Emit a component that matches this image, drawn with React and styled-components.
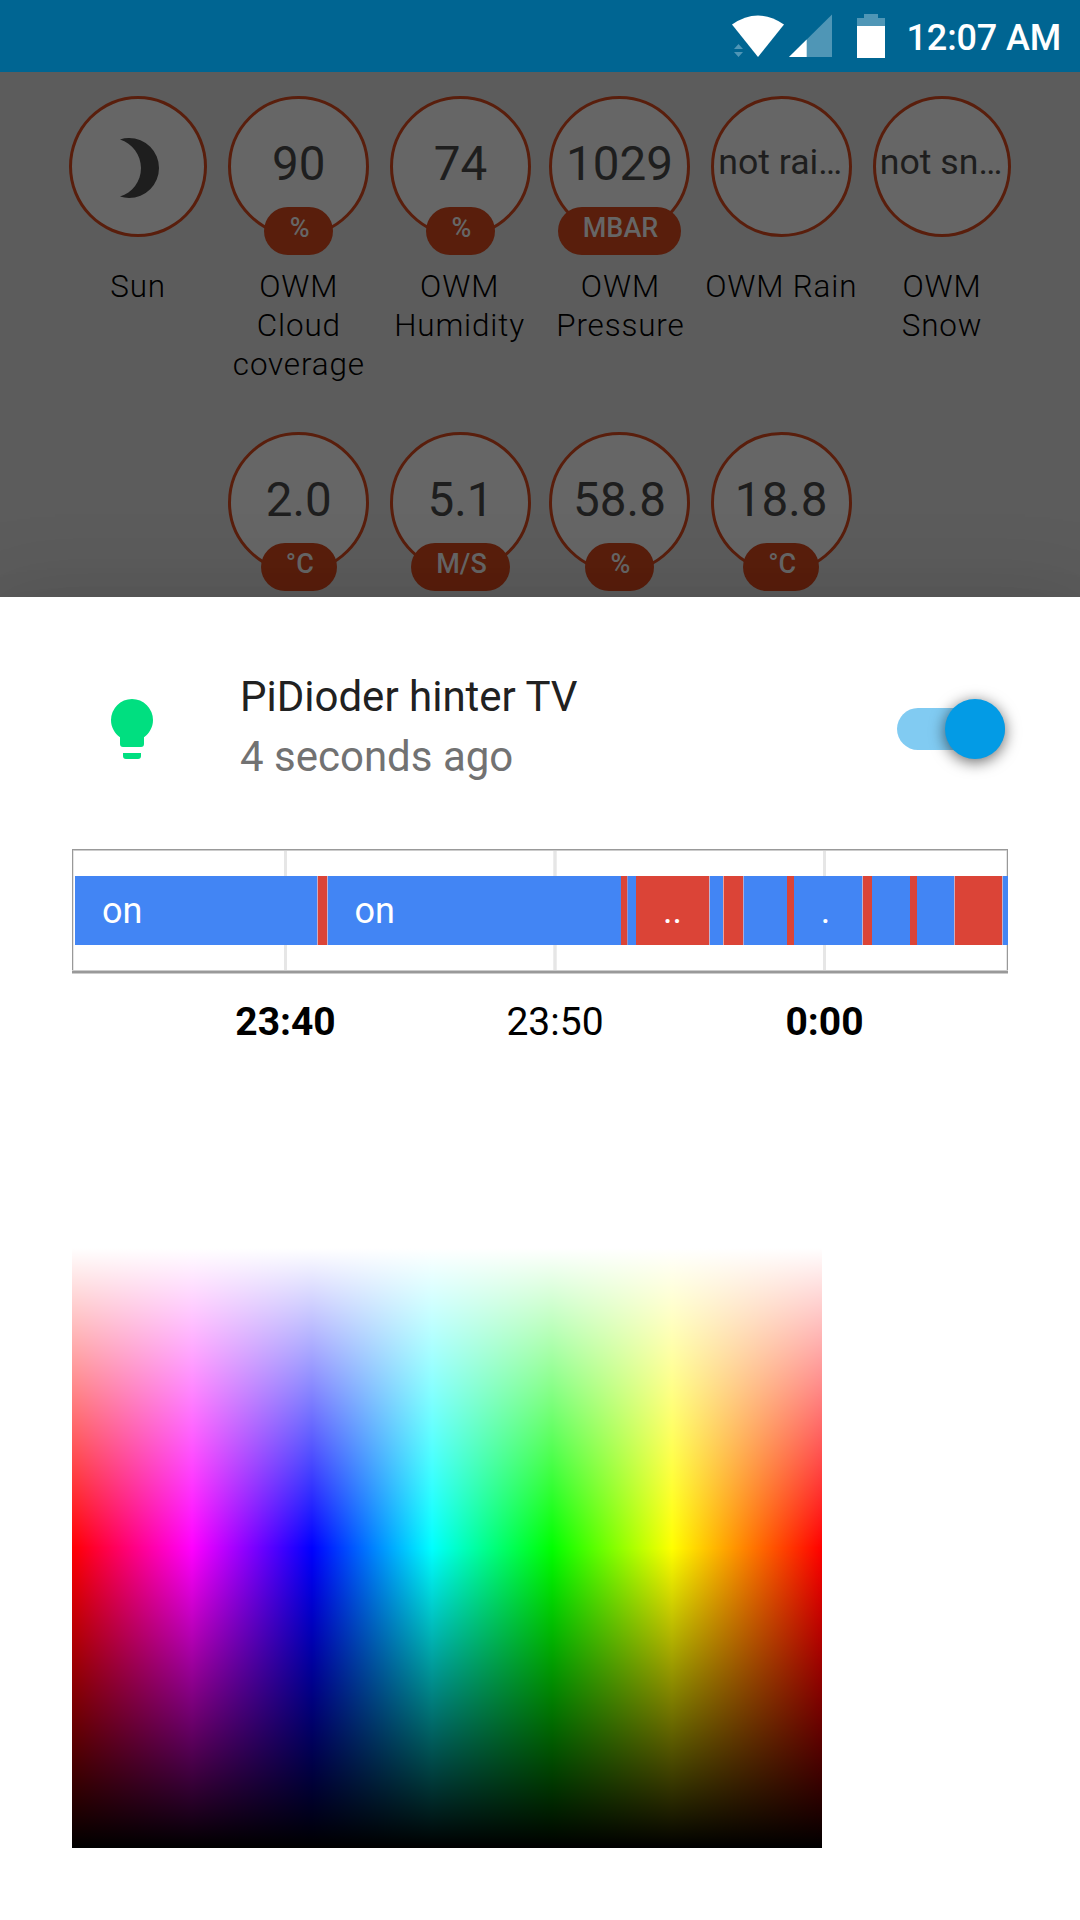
import React from 'react';
import styled, { createGlobalStyle } from 'styled-components';

const GlobalStyle = createGlobalStyle`
  * { box-sizing: border-box; }
  body { margin: 0; background: #5c5c5c; font-family: Roboto, "Liberation Sans", sans-serif; }
`;

const Screen = styled.div`
  width: 1080px;
  height: 1920px;
  overflow: hidden;
  display: flex;
  flex-direction: column;
  background: #5c5c5c;
`;

const StatusBar = styled.header`
  height: 72px;
  flex: none;
  display: flex;
  justify-content: flex-end;
  background: #006592;
  padding-right: 19px;
`;

const StatusIcons = styled.svg`
  width: 160px;
  height: 72px;
  flex: none;
  margin-right: 16px;
`;

const Clock = styled.time`
  width: 155px;
  font-size: 36px;
  font-weight: 500;
  line-height: 42px;
  letter-spacing: -0.15px;
  padding-top: 17px;
  text-align: right;
  white-space: nowrap;
  color: #fff;
`;

const Badges = styled.section`
  height: 525px;
  flex: none;
  display: flex;
  flex-direction: column;
  padding-top: 24px;
`;

const BadgeRow = styled.div`
  height: 336px;
  flex: none;
  display: flex;
  justify-content: center;
`;

const Badge = styled.div`
  width: 160.8px;
  flex: none;
  display: flex;
  flex-direction: column;
  align-items: center;
`;

const Circle = styled.div`
  width: ${(p) => p.$width || 141}px;
  height: 141px;
  margin-left: ${(p) => p.$shift || 0}px;
  border: 3px solid #591e0c;
  border-radius: 50%;
  background: #666;
  display: flex;
  flex-direction: column;
  align-items: center;
`;

const Value = styled.div`
  height: 108px;
  flex: none;
  display: flex;
  align-items: center;
  justify-content: center;
  padding-top: ${(p) => (p.$small ? 18 : 27)}px;
  padding-right: ${(p) => (p.$small ? 2 : 0)}px;
  margin-top: ${(p) => (p.$small ? 0 : -3)}px;
  font-size: ${(p) => (p.$small ? 35.7 : 47.6)}px;
  line-height: 56px;
  white-space: nowrap;
  color: #1e1e1e;
`;

const MoonIcon = styled.svg`
  width: 72px;
  height: 72px;
  margin-top: 33px;
  fill: #1e1e1e;
`;

const Unit = styled.div`
  height: 48px;
  min-width: 69px;
  flex: none;
  margin-top: 3px;
  padding: 5px 23px 0 25px;
  border-radius: 24px;
  background: #591e0c;
  color: #666;
  font-size: 27px;
  font-weight: 500;
  line-height: 32px;
  text-align: center;
  white-space: nowrap;
`;

const BadgeName = styled.div`
  width: 161px;
  margin-top: 30px;
  font-size: 31.4px;
  font-weight: 300;
  line-height: 39px;
  letter-spacing: 0.85px;
  text-align: center;
  color: #000;
`;

const Sheet = styled.main`
  height: 1323px;
  flex: none;
  position: relative;
  display: flex;
  flex-direction: column;
  padding: 72px 72px 0;
  background: #fff;
  box-shadow: 0 48px 72px 6px rgba(0, 0, 0, 0.14), 0 18px 90px 15px rgba(0, 0, 0, 0.12),
    0 24px 30px -15px rgba(0, 0, 0, 0.4);
`;

const EntityRow = styled.div`
  height: 120px;
  flex: none;
  display: flex;
  align-items: center;
  padding-left: 24px;
`;

const BulbIcon = styled.svg`
  width: 72px;
  height: 72px;
  flex: none;
  fill: #00df80;
`;

const EntityInfo = styled.div`
  flex: 1;
  margin-left: 72px;
  padding-bottom: 4px;
  font-size: 42px;
  line-height: 60px;
  white-space: nowrap;
`;

const EntityName = styled.div`
  color: #212121;
`;

const EntityAge = styled.div`
  color: #727272;
`;

const Toggle = styled.div`
  width: 108px;
  height: 60px;
  margin-right: 3px;
  display: flex;
  align-items: center;
`;

const ToggleBar = styled.div`
  width: 108px;
  height: 42px;
  border-radius: 21px;
  background: #81cbf2;
  display: flex;
  align-items: center;
  justify-content: flex-end;
`;

const ToggleKnob = styled.div`
  width: 60px;
  height: 60px;
  flex: none;
  border-radius: 50%;
  background: #039be5;
  box-shadow: 0 3px 15px rgba(0, 0, 0, 0.6);
`;

const Timeline = styled.svg`
  width: 936px;
  height: 200px;
  flex: none;
  margin-top: 60px;
`;

const SegmentLabel = styled.text`
  font-size: 36px;
  fill: #fff;
`;

const AxisLabel = styled.text`
  font-size: 39px;
  font-weight: ${(p) => (p.$major ? 700 : 400)};
  text-anchor: middle;
  fill: #000;
`;

const ColorPicker = styled.div`
  width: 750px;
  height: 600px;
  flex: none;
  margin-top: 199px;
  background: linear-gradient(to bottom, #fff 0%, rgba(255, 255, 255, 0) 50%, rgba(0, 0, 0, 0) 50%, #000 100%),
    linear-gradient(to right, #f00 0%, #f0f 16%, #00f 32%, #0ff 48%, #0f0 64%, #ff0 80%, #f00 100%);
`;

const ROWS = [
  [
    { name: 'Sun', moon: true, width: 138 },
    { name: 'OWM Cloud coverage', value: '90', unit: '%' },
    { name: 'OWM Humidity', value: '74', unit: '%', shift: 1.8 },
    { name: 'OWM Pressure', value: '1029', unit: 'MBAR', shift: -1.8 },
    { name: 'OWM Rain', value: 'not rai…', small: true },
    { name: 'OWM Snow', value: 'not sn…', small: true, width: 138 },
  ],
  [
    { value: '2.0', unit: '°C' },
    { value: '5.1', unit: 'M/S', shift: 1.8 },
    { value: '58.8', unit: '%', shift: -1.8 },
    { value: '18.8', unit: '°C' },
  ],
];

/* [start, end, isOn] in chart units */
const SEGMENTS = [
  [3, 245.3, true],
  [245.7, 255.3, false],
  [255.7, 549, true],
  [549, 555.5, false],
  [555.5, 564, true],
  [564, 637.3, false],
  [637.7, 651, true],
  [651.5, 671.3, false],
  [671.6, 715, true],
  [715, 722, false],
  [722, 790.4, true],
  [790.8, 800, false],
  [800, 838, true],
  [838, 845, false],
  [845, 882.3, true],
  [882.7, 930.3, false],
  [930.7, 936, true],
];

export default function App() {
  return (
    <Screen>
      <GlobalStyle />
      <StatusBar>
        <StatusIcons viewBox="730 0 160 72">
          <path d="M732 24.5Q758 6.5 784 24.5L758 57Z" fill="#fff" />
          <path d="M734 49L738.5 44L743 49ZM734 52H743L738.5 57Z" fill="#4f96b6" />
          <path d="M789 57L832 14.5V57Z" fill="#4f96b6" />
          <path d="M789 57L806.7 39.5V57Z" fill="#fff" />
          <path d="M857 26V18H864V14H878V18H885V26Z" fill="#4f96b6" />
          <path d="M857 26H885V58H857Z" fill="#fff" />
        </StatusIcons>
        <Clock>12:07 AM</Clock>
      </StatusBar>
      <Badges>
        {ROWS.map((row, r) => (
          <BadgeRow key={r}>
            {row.map((b, i) => (
              <Badge key={i}>
                <Circle $width={b.width} $shift={b.shift}>
                  {b.moon ? (
                    <MoonIcon viewBox="0 0 24 24">
                      <path d="M9,2C7.95,2 6.95,2.16 6,2.46C10.06,3.73 13,7.5 13,12C13,16.5 10.06,20.27 6,21.54C6.95,21.84 7.95,22 9,22A10,10 0 0,0 19,12A10,10 0 0,0 9,2Z" />
                    </MoonIcon>
                  ) : (
                    <Value $small={b.small}>{b.value}</Value>
                  )}
                  {b.unit && <Unit>{b.unit}</Unit>}
                </Circle>
                {b.name && <BadgeName>{b.name}</BadgeName>}
              </Badge>
            ))}
          </BadgeRow>
        ))}
      </Badges>
      <Sheet>
        <EntityRow>
          <BulbIcon viewBox="0 0 24 24">
            <path d="M12,2A7,7 0 0,0 5,9C5,11.38 6.19,13.47 8,14.74V17A1,1 0 0,0 9,18H15A1,1 0 0,0 16,17V14.74C17.81,13.47 19,11.38 19,9A7,7 0 0,0 12,2M9,21A1,1 0 0,0 10,22H14A1,1 0 0,0 15,21V20H9V21Z" />
          </BulbIcon>
          <EntityInfo>
            <EntityName>PiDioder hinter TV</EntityName>
            <EntityAge>4 seconds ago</EntityAge>
          </EntityInfo>
          <Toggle>
            <ToggleBar>
              <ToggleKnob />
            </ToggleBar>
          </Toggle>
        </EntityRow>
        <Timeline viewBox="0 0 936 200">
          <path d="M1 1.5H935V122H1Z" fill="#fff" stroke="#ccc" strokeWidth="1" />
          <path d="M212 2H215V121H212ZM481.3 2H484.7V121H481.3ZM751 2H754V121H751Z" fill="#e6e6e6" />
          <path d="M0 0H936V1H0ZM0 0H1V124H0ZM935 0H936V124H935Z" fill="#999" />
          <path d="M0 121H936V125H0Z" fill="#ccc" />
          <path d="M0 122H936V124H0Z" fill="#999" />
          {SEGMENTS.map(([start, end, on]) => (
            <rect key={start} x={start} y="27" width={end - start} height="69" fill={on ? '#4285f4' : '#db4437'} />
          ))}
          <SegmentLabel x="30" y="73.5">on</SegmentLabel>
          <SegmentLabel x="282.4" y="73.5">on</SegmentLabel>
          <SegmentLabel x="591" y="73.5">..</SegmentLabel>
          <SegmentLabel x="748.7" y="73.5">.</SegmentLabel>
          <AxisLabel $major x="213.5" y="185.5">23:40</AxisLabel>
          <AxisLabel x="483" y="185.5">23:50</AxisLabel>
          <AxisLabel $major x="752.5" y="185.5">0:00</AxisLabel>
        </Timeline>
        <ColorPicker />
      </Sheet>
    </Screen>
  );
}
